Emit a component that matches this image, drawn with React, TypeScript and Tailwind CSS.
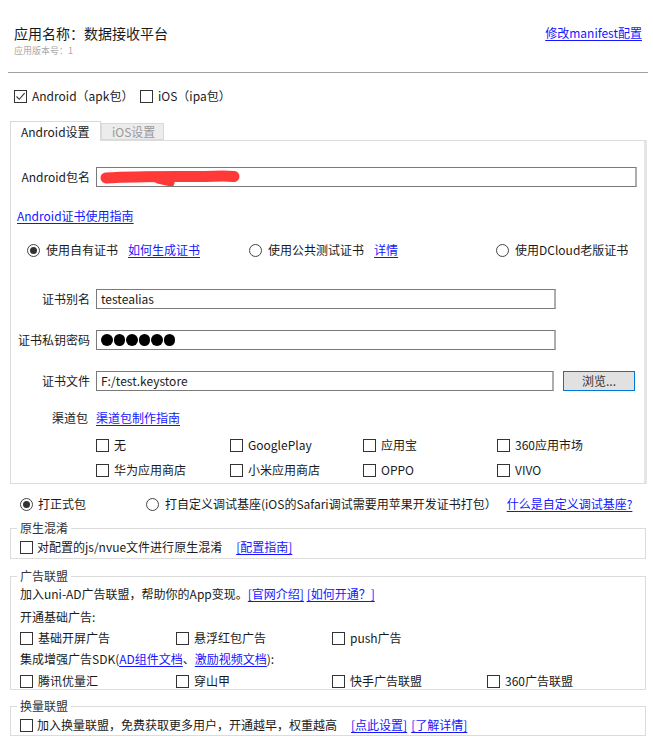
import type { ReactNode } from "react";

const link = "text-[#1515ff] underline underline-offset-2 cursor-pointer";

function Box({ checked = false }: { checked?: boolean }) {
  return (
    <span className="inline-flex h-[13px] w-[13px] shrink-0 items-center justify-center border border-[#333] bg-white">
      {checked && (
        <svg width="11" height="11" viewBox="0 0 11 11" fill="none">
          <path d="M1.5 5.5L4.3 8.3L9.6 2.2" stroke="#333" strokeWidth="1.1" />
        </svg>
      )}
    </span>
  );
}

function Radio({ on = false }: { on?: boolean }) {
  return (
    <span className="inline-flex h-[13px] w-[13px] shrink-0 items-center justify-center rounded-full border border-[#444] bg-white">
      {on && <span className="h-[7px] w-[7px] rounded-full bg-[#333]" />}
    </span>
  );
}

function Check({ label, checked }: { label: ReactNode; checked?: boolean }) {
  return (
    <label className="flex h-[16px] items-center gap-[5px]">
      <Box checked={checked} />
      <span>{label}</span>
    </label>
  );
}

function Field({ className = "", children }: { className?: string; children?: ReactNode }) {
  return (
    <div
      className={`relative h-[20px] border border-[#7a7a7a] border-r-2 border-r-[#adadad] bg-white pl-[4px] leading-[18px] ${className}`}
    >
      {children}
    </div>
  );
}

function Row({ label, children, className = "" }: { label: string; children: ReactNode; className?: string }) {
  return (
    <div className={`flex items-center ${className}`}>
      <span className="mr-[6px] w-[79px] text-right">{label}</span>
      {children}
    </div>
  );
}

const channels = ["无", "GooglePlay", "应用宝", "360应用市场", "华为应用商店", "小米应用商店", "OPPO", "VIVO"];

export default function App() {
  return (
    <div className="min-h-[740px] w-full bg-white font-['Noto_Sans_CJK_SC',sans-serif] text-[12px] leading-[16px] text-[#1a1a1a]">
      {/* 头部 */}
      <div className="flex items-start justify-between pl-[14px] pr-[11px] pt-[23px]">
        <div>
          <div className="text-[14px] leading-[20px]">应用名称：数据接收平台</div>
          <div className="mt-[2px] text-[9px] leading-[12px] text-[#aaa]">应用版本号：1</div>
        </div>
        <a className={`mt-[2px] ${link}`}>修改manifest配置</a>
      </div>
      <div className="ml-[8px] mr-[5px] mt-[15px] h-px bg-[#a0a0a0]" />

      <div className="mt-[15px] flex h-[16px] items-center pl-[14px]">
        <div className="w-[126px]">
          <Check checked label="Android（apk包）" />
        </div>
        <Check label="iOS（ipa包）" />
      </div>

      {/* 选项卡 */}
      <div className="ml-[10px] mr-[6px] mt-[17px]">
        <div className="-mb-px flex items-end">
          <div className="relative z-10 h-[20px] w-[91px] border border-b-0 border-[#d9d9d9] bg-white pl-[10px] leading-[19px]">
            Android设置
          </div>
          <div className="mb-px h-[17px] w-[63px] border border-[#d9d9d9] bg-[#ececec] pl-[10px] leading-[16px] text-[#999]">
            iOS设置
          </div>
        </div>

        <div className="border border-[#dcdcdc] border-r-[3px] border-r-[#e6e6e6] pb-[5px] pt-[26px]">
          <Row label="Android包名">
            <Field className="w-[541px]">
              <svg className="absolute left-[1px] top-0" width="146" height="18" viewBox="0 0 146 18" fill="none">
                <path
                  d="M8 10C40 8 80 8.5 100 8.5C116 8.5 126 7.5 136 8.5"
                  stroke="#ff3838"
                  strokeWidth="11"
                  strokeLinecap="round"
                />
                <path d="M60 12L73 15" stroke="#ff3838" strokeWidth="7" strokeLinecap="round" />
              </svg>
            </Field>
          </Row>

          <div className="mt-[21px] pl-[6px]">
            <a className={link}>Android证书使用指南</a>
          </div>

          <div className="mt-[18px] flex h-[16px] items-center pl-[16px]">
            <div className="flex w-[222px] items-center">
              <Radio on />
              <span className="ml-[6px]">使用自有证书</span>
              <a className={`ml-[10px] ${link}`}>如何生成证书</a>
            </div>
            <div className="flex w-[247px] items-center">
              <Radio />
              <span className="ml-[6px]">使用公共测试证书</span>
              <a className={`ml-[10px] ${link}`}>详情</a>
            </div>
            <div className="flex items-center">
              <Radio />
              <span className="ml-[6px]">使用DCloud老版证书</span>
            </div>
          </div>

          <Row label="证书别名" className="mt-[31px]">
            <Field className="w-[460px]">testealias</Field>
          </Row>
          <Row label="证书私钥密码" className="mt-[21px]">
            <Field className="flex w-[460px] items-center gap-px">
              {[0, 1, 2, 3, 4, 5].map((i) => (
                <span key={i} className="h-[11.5px] w-[11.5px] rounded-full bg-black" />
              ))}
            </Field>
          </Row>
          <Row label="证书文件" className="mt-[21px]">
            <Field className="w-[458px]">F:/test.keystore</Field>
            <button className="ml-[9px] h-[20px] w-[72px] border border-[#0078d7] bg-[#e1e1e1] text-[#333]">
              浏览...
            </button>
          </Row>

          <div className="mt-[19px] flex items-center">
            <span className="mr-[6px] w-[79px] pr-[2px] text-right">渠道包</span>
            <a className={link}>渠道包制作指南</a>
          </div>
          <div className="mt-[11px] grid grid-cols-[134px_133px_134px_1fr] gap-y-[9px] pl-[85px]">
            {channels.map((c) => (
              <Check key={c} label={c} />
            ))}
          </div>
        </div>
      </div>

      <div className="mt-[12px] flex h-[16px] items-center pl-[20px]">
        <div className="flex w-[126px] items-center gap-[5px]">
          <Radio on />
          <span>打正式包</span>
        </div>
        <div className="flex items-center">
          <Radio />
          <span className="ml-[6px]">打自定义调试基座(iOS的Safari调试需要用苹果开发证书打包）</span>
          <a className={`ml-[10px] ${link}`}>什么是自定义调试基座?</a>
        </div>
      </div>

      {/* 原生混淆 */}
      <fieldset className="ml-[10px] mr-[7px] mt-[8px] border border-[#dcdcdc] px-[9px] pb-[3px]">
        <legend className="-ml-[3px] px-[3px] text-[#333]">原生混淆</legend>
        <div className="mt-[3px] flex h-[16px] items-center gap-[4px]">
          <Box />
          <span>对配置的js/nvue文件进行原生混淆</span>
          <a className={`ml-[10px] ${link}`}>[配置指南]</a>
        </div>
      </fieldset>

      {/* 广告联盟 */}
      <fieldset className="ml-[10px] mr-[7px] mt-[9px] border border-[#dcdcdc] px-[9px]">
        <legend className="-ml-[3px] px-[3px] text-[#333]">广告联盟</legend>
        <div className="mt-[2px]">
          加入uni-AD广告联盟，帮助你的App变现。
          <a className={link}>[官网介绍]</a> <a className={link}>[如何开通？]</a>
        </div>
        <div className="mt-[7px]">开通基础广告:</div>
        <div className="mt-[5px] grid grid-cols-[156px_156px_155px_1fr]">
          <Check label="基础开屏广告" />
          <Check label="悬浮红包广告" />
          <Check label="push广告" />
        </div>
        <div className="mt-[5px]">
          集成增强广告SDK(<a className={link}>AD组件文档</a>、<a className={link}>激励视频文档</a>):
        </div>
        <div className="mt-[6px] grid grid-cols-[156px_156px_155px_1fr]">
          <Check label="腾讯优量汇" />
          <Check label="穿山甲" />
          <Check label="快手广告联盟" />
          <Check label="360广告联盟" />
        </div>
      </fieldset>

      {/* 换量联盟 */}
      <fieldset className="ml-[10px] mr-[7px] mt-[8px] border border-[#dcdcdc] px-[9px] pb-[2px]">
        <legend className="-ml-[3px] px-[3px] text-[#333]">换量联盟</legend>
        <div className="mt-[3px] flex h-[16px] items-center gap-[4px]">
          <Box />
          <span>加入换量联盟，免费获取更多用户，开通越早，权重越高</span>
          <a className={`ml-[10px] ${link}`}>[点此设置]</a>
          <a className={link}>[了解详情]</a>
        </div>
      </fieldset>
    </div>
  );
}
